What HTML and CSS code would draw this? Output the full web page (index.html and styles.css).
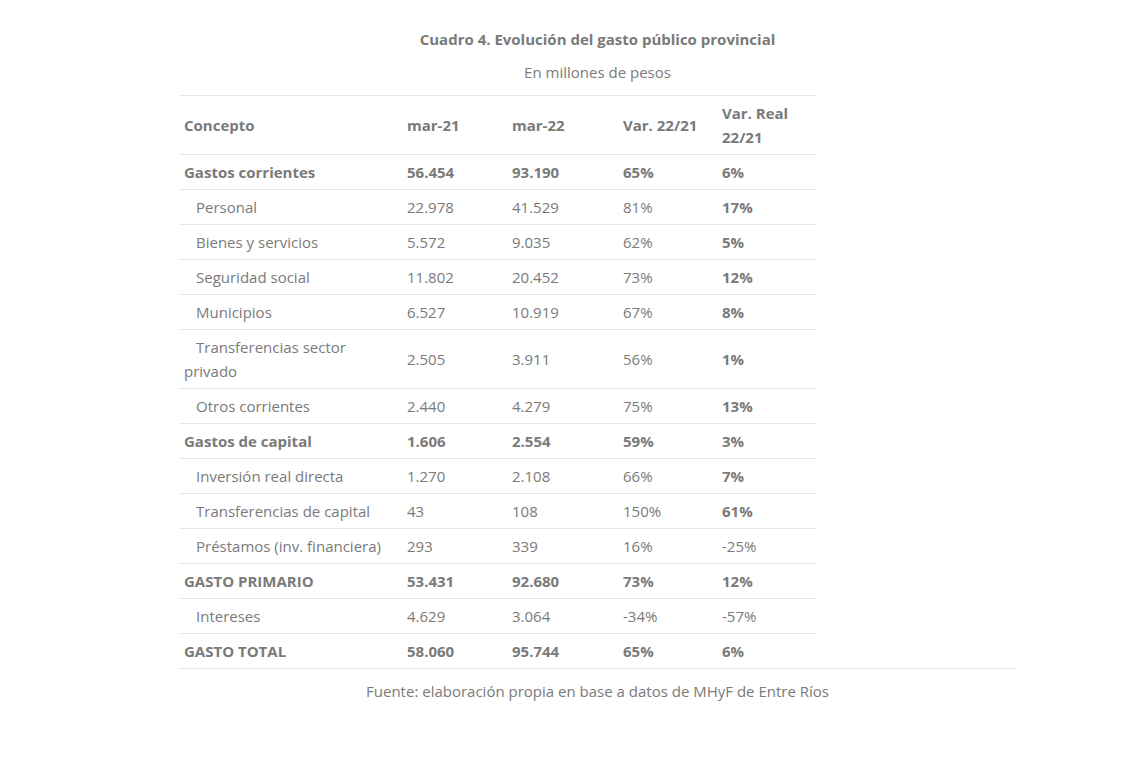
FILE: index.html
```html
<!DOCTYPE html>
<html lang="es">
<head>
<meta charset="utf-8">
<title>Cuadro 4</title>
<link rel="stylesheet" href="styles.css">
</head>
<body>
<div class="page">
  <figure class="figure">
    <p class="title">Cuadro 4. Evolución del gasto público provincial</p>
    <p class="subtitle">En millones de pesos</p>
    <table class="data">
      <colgroup>
        <col class="c1"><col class="c2"><col class="c3"><col class="c4"><col class="c5">
      </colgroup>
      <thead>
        <tr><th>Concepto</th><th>mar-21</th><th>mar-22</th><th>Var. 22/21</th><th>Var. Real 22/21</th></tr>
      </thead>
      <tbody>
        <tr class="b"><td>Gastos corrientes</td><td>56.454</td><td>93.190</td><td>65%</td><td>6%</td></tr>
        <tr class="sub"><td>Personal</td><td>22.978</td><td>41.529</td><td>81%</td><td class="strong">17%</td></tr>
        <tr class="sub"><td>Bienes y servicios</td><td>5.572</td><td>9.035</td><td>62%</td><td class="strong">5%</td></tr>
        <tr class="sub"><td>Seguridad social</td><td>11.802</td><td>20.452</td><td>73%</td><td class="strong">12%</td></tr>
        <tr class="sub"><td>Municipios</td><td>6.527</td><td>10.919</td><td>67%</td><td class="strong">8%</td></tr>
        <tr class="sub"><td>Transferencias sector privado</td><td>2.505</td><td>3.911</td><td>56%</td><td class="strong">1%</td></tr>
        <tr class="sub"><td>Otros corrientes</td><td>2.440</td><td>4.279</td><td>75%</td><td class="strong">13%</td></tr>
        <tr class="b"><td>Gastos de capital</td><td>1.606</td><td>2.554</td><td>59%</td><td>3%</td></tr>
        <tr class="sub"><td>Inversión real directa</td><td>1.270</td><td>2.108</td><td>66%</td><td class="strong">7%</td></tr>
        <tr class="sub"><td>Transferencias de capital</td><td>43</td><td>108</td><td>150%</td><td class="strong">61%</td></tr>
        <tr class="sub"><td>Préstamos (inv. financiera)</td><td>293</td><td>339</td><td>16%</td><td>-25%</td></tr>
        <tr class="b"><td>GASTO PRIMARIO</td><td>53.431</td><td>92.680</td><td>73%</td><td>12%</td></tr>
        <tr class="sub"><td>Intereses</td><td>4.629</td><td>3.064</td><td>-34%</td><td>-57%</td></tr>
        <tr class="b"><td>GASTO TOTAL</td><td>58.060</td><td>95.744</td><td>65%</td><td>6%</td></tr>
      </tbody>
    </table>
    <figcaption class="source">Fuente: elaboración propia en base a datos de MHyF de Entre Ríos</figcaption>
  </figure>
</div>
</body>
</html>
```

FILE: styles.css
```css
html, body {
  margin: 0;
  padding: 0;
  background: #ffffff;
}
body {
  font-family: "Open Sans", "Liberation Sans", sans-serif;
  font-size: 15px;
  line-height: 24px;
  color: #7a7a7a;
}
.page {
  padding: 27px 0 0 179px;
}
.figure {
  margin: 0;
  width: 837px;
}
.title {
  margin: 0;
  text-align: center;
  font-weight: 700;
  line-height: 24px;
}
.subtitle {
  margin: 9px 0 11px;
  text-align: center;
}
.data {
  width: 638px;
  border-collapse: collapse;
  border-top: 1px solid #e6e6e6;
}
.c1 { width: 223px; }
.c2 { width: 105px; }
.c3 { width: 111px; }
.c4 { width: 99px; }
.c5 { width: 100px; }
.data th,
.data td {
  text-align: left;
  vertical-align: middle;
  padding: 5px 5px;
  border-bottom: 1px solid #e6e6e6;
  line-height: 24px;
}
.data th {
  font-weight: 700;
}
.data tr.b td {
  font-weight: 700;
}
.data tr.sub td:first-child {
  text-indent: 12px;
}
.data td.strong {
  font-weight: 700;
}
.data tbody tr:last-child td {
  border-bottom: none;
}
.source {
  border-top: 1px solid #e6e6e6;
  text-align: center;
  padding-top: 10px;
}
```
